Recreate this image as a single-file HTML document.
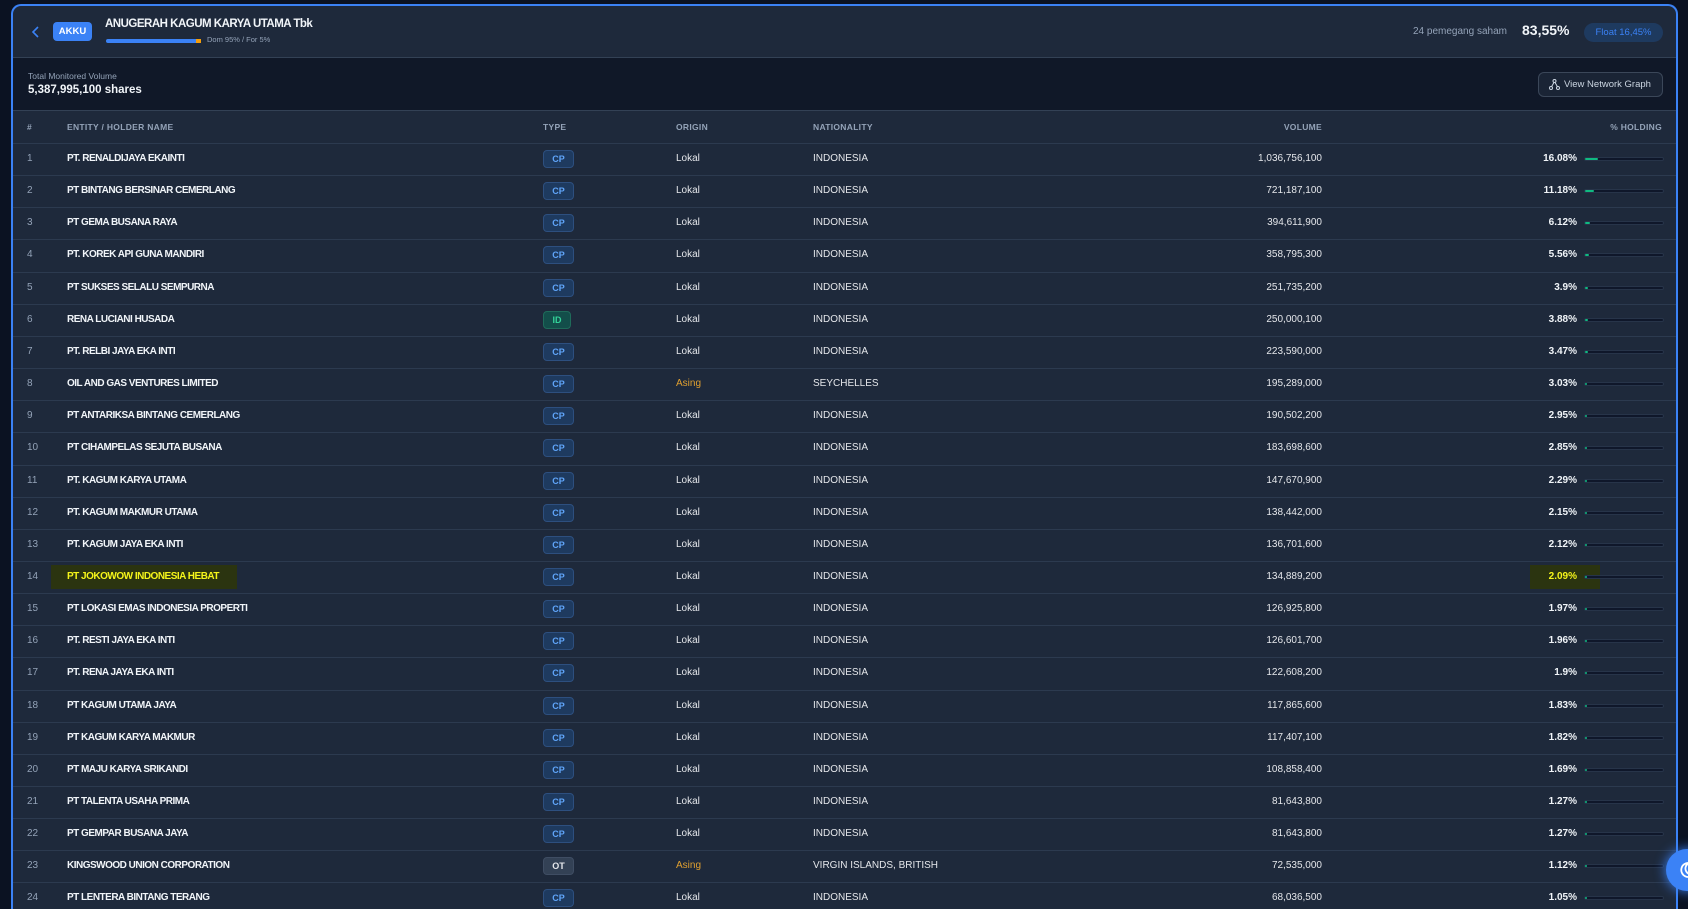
<!DOCTYPE html>
<html><head><meta charset="utf-8"><style>
*{box-sizing:border-box;margin:0;padding:0}
html{width:1688px;height:909px;overflow:hidden}
body{width:1688px;height:909px;overflow:hidden;background:#0b1222;font-family:"Liberation Sans",sans-serif;color:#e5e7eb;position:relative}
.panel{position:absolute;left:11px;top:4px;width:1667px;height:905px;background:#1e293b;border:2px solid #3b82f6;border-bottom:none;border-radius:10px 10px 0 0;overflow:hidden}
.hdr{position:absolute;left:0;top:0;width:100%;height:52px;border-bottom:1px solid #334155}
.sum{position:absolute;left:0;top:52px;width:100%;height:53px;background:#101828;border-bottom:1px solid #334155}
.abs{position:absolute;white-space:nowrap}
.th{position:absolute;top:116px;font-size:8.5px;font-weight:bold;color:#94a3b8;letter-spacing:.3px}
.row{position:absolute;left:0;width:100%;height:32.15px;border-top:1px solid #2c3a4f}
.row div{position:absolute;top:0;line-height:30px;white-space:nowrap;font-size:10px}
.num{left:14px;color:#94a3b8}
.nm{left:54px;font-weight:bold;letter-spacing:-.5px;color:#f1f5f9}
.badge{left:530px;top:6px!important;height:18px;line-height:16px!important;width:31px;text-align:center;border-radius:4px;font-size:9px!important;font-weight:bold}
.cp{background:#1e3a5f;border:1px solid #2d4f7f;color:#60a5fa}
.id{background:#134e4a;border:1px solid #1f6b5a;color:#34d399;width:28px}
.ot{background:#334155;border:1px solid #3f4d63;color:#e5e7eb}
.org{left:663px;color:#e5e7eb}
.as{color:#e0a030}
.nat{left:800px;color:#e5e7eb}
.vol{right:354px;text-align:right;color:#e5e7eb}
.pct{right:99px;text-align:right;font-weight:bold;color:#f1f5f9}
.bar{left:1571px;top:13px!important;width:80px;height:4px;background:#0f172a;border:1px solid #273449;border-radius:2px}
.bar i{position:absolute;left:0;top:0;height:100%;background:#10b981;border-radius:2px}
.hl{background:#2b3410}
</style></head><body>
<div class="panel">
 <div class="hdr">
  <svg class="abs" style="left:18px;top:19px" width="10" height="14" viewBox="0 0 10 14"><path d="M7 2L2 7l5 5" stroke="#3b82f6" stroke-width="1.6" fill="none"/></svg>
  <div class="abs" style="left:40px;top:16px;width:39px;height:19px;background:#3b82f6;border-radius:4px;color:#fff;font-size:9.5px;font-weight:bold;text-align:center;line-height:19px">AKKU</div>
  <div class="abs" style="left:92px;top:12px;font-size:11.5px;font-weight:bold;letter-spacing:-.5px;color:#f1f5f9">ANUGERAH KAGUM KARYA UTAMA Tbk</div>
  <div class="abs" style="left:93px;top:33px;width:95px;height:4px;background:#3b82f6;border-radius:2px"><span style="position:absolute;right:0;top:0;width:5px;height:4px;background:#f59e0b"></span></div>
  <div class="abs" style="left:194px;top:29px;font-size:7.5px;color:#94a3b8">Dom 95% / For 5%</div>
  <div class="abs" style="left:1400px;top:20px;font-size:10px;color:#94a3b8">24 pemegang saham</div>
  <div class="abs" style="left:1509px;top:16px;font-size:14px;font-weight:bold;color:#f1f5f9">83,55%</div>
  <div class="abs" style="left:1571px;top:17px;width:79px;height:19px;border-radius:10px;background:#1e3a5f;color:#3b82f6;font-size:9.5px;text-align:center;line-height:19px">Float 16,45%</div>
 </div>
 <div class="sum">
  <div class="abs" style="left:15px;top:13px;font-size:8.5px;color:#94a3b8">Total Monitored Volume</div>
  <div class="abs" style="left:15px;top:26px;font-size:11.5px;font-weight:bold;color:#f1f5f9">5,387,995,100 shares</div>
  <div class="abs" style="left:1525px;top:14px;width:125px;height:25px;border:1px solid #3b4759;border-radius:6px;background:#1a2435;font-size:9.5px;color:#cbd5e1;line-height:23px;padding-left:25px">View Network Graph
   <svg style="position:absolute;left:10px;top:6px" width="11" height="11" viewBox="0 0 11 11"><circle cx="5.5" cy="2" r="1.5" fill="none" stroke="#cbd5e1" stroke-width="1"/><circle cx="2" cy="9" r="1.5" fill="none" stroke="#cbd5e1" stroke-width="1"/><circle cx="9" cy="9" r="1.5" fill="none" stroke="#cbd5e1" stroke-width="1"/><path d="M5 3.4L2.6 7.6M6 3.4l2.4 4.2" stroke="#cbd5e1" stroke-width="1"/></svg></div>
 </div>
 <div class="th" style="left:14px">#</div>
 <div class="th" style="left:54px">ENTITY / HOLDER NAME</div>
 <div class="th" style="left:530px">TYPE</div>
 <div class="th" style="left:663px">ORIGIN</div>
 <div class="th" style="left:800px">NATIONALITY</div>
 <div class="th" style="right:354px">VOLUME</div>
 <div class="th" style="right:14px">% HOLDING</div>
 <div id="rows"></div>
</div>
<div class="abs" style="left:1666px;top:849px;width:44px;height:42px;border-radius:21px;background:#3b82f6;box-shadow:0 0 12px #3b82f6"><svg style="position:absolute;left:12px;top:12px" width="18" height="18" viewBox="0 0 18 18"><path d="M11 2a7 7 0 1 0 5 11A6 6 0 0 1 11 2z" fill="none" stroke="#fff" stroke-width="1.8"/></svg></div>
<script>
var d=[["PT. RENALDIJAYA EKAINTI","cp","Lokal","INDONESIA","1,036,756,100","16.08"],
["PT BINTANG BERSINAR CEMERLANG","cp","Lokal","INDONESIA","721,187,100","11.18"],
["PT GEMA BUSANA RAYA","cp","Lokal","INDONESIA","394,611,900","6.12"],
["PT. KOREK API GUNA MANDIRI","cp","Lokal","INDONESIA","358,795,300","5.56"],
["PT SUKSES SELALU SEMPURNA","cp","Lokal","INDONESIA","251,735,200","3.9"],
["RENA LUCIANI HUSADA","id","Lokal","INDONESIA","250,000,100","3.88"],
["PT. RELBI JAYA EKA INTI","cp","Lokal","INDONESIA","223,590,000","3.47"],
["OIL AND GAS VENTURES LIMITED","cp","Asing","SEYCHELLES","195,289,000","3.03"],
["PT ANTARIKSA BINTANG CEMERLANG","cp","Lokal","INDONESIA","190,502,200","2.95"],
["PT CIHAMPELAS SEJUTA BUSANA","cp","Lokal","INDONESIA","183,698,600","2.85"],
["PT. KAGUM KARYA UTAMA","cp","Lokal","INDONESIA","147,670,900","2.29"],
["PT. KAGUM MAKMUR UTAMA","cp","Lokal","INDONESIA","138,442,000","2.15"],
["PT. KAGUM JAYA EKA INTI","cp","Lokal","INDONESIA","136,701,600","2.12"],
["PT JOKOWOW INDONESIA HEBAT","cp","Lokal","INDONESIA","134,889,200","2.09"],
["PT LOKASI EMAS INDONESIA PROPERTI","cp","Lokal","INDONESIA","126,925,800","1.97"],
["PT. RESTI JAYA EKA INTI","cp","Lokal","INDONESIA","126,601,700","1.96"],
["PT. RENA JAYA EKA INTI","cp","Lokal","INDONESIA","122,608,200","1.9"],
["PT KAGUM UTAMA JAYA","cp","Lokal","INDONESIA","117,865,600","1.83"],
["PT KAGUM KARYA MAKMUR","cp","Lokal","INDONESIA","117,407,100","1.82"],
["PT MAJU KARYA SRIKANDI","cp","Lokal","INDONESIA","108,858,400","1.69"],
["PT TALENTA USAHA PRIMA","cp","Lokal","INDONESIA","81,643,800","1.27"],
["PT GEMPAR BUSANA JAYA","cp","Lokal","INDONESIA","81,643,800","1.27"],
["KINGSWOOD UNION CORPORATION","ot","Asing","VIRGIN ISLANDS, BRITISH","72,535,000","1.12"],
["PT LENTERA BINTANG TERANG","cp","Lokal","INDONESIA","68,036,500","1.05"]];
var h="";
d.forEach(function(r,i){var t=137+i*32.15;var hl=i==13;
h+='<div class="row" style="top:'+t+'px">'+
(hl?'<div style="left:38px;top:3px;height:24px;width:186px" class="hl"></div><div style="left:1517px;top:3px;height:24px;width:70px" class="hl"></div>':'')+
'<div class="num">'+(i+1)+'</div><div class="nm"'+(hl?' style="color:#f5f51a"':'')+'>'+r[0]+'</div>'+
'<div class="badge '+r[1]+'">'+r[1].toUpperCase()+'</div>'+
'<div class="org'+(r[2]=="Asing"?' as':'')+'">'+r[2]+'</div><div class="nat">'+r[3]+'</div>'+
'<div class="vol">'+r[4]+'</div><div class="pct"'+(hl?' style="color:#f5f51a"':'')+'>'+r[5]+'%</div>'+
'<div class="bar"><i style="width:'+Math.max(2,parseFloat(r[5]))+'%"></i></div></div>';});
document.getElementById("rows").innerHTML=h;
</script>
</body></html>
